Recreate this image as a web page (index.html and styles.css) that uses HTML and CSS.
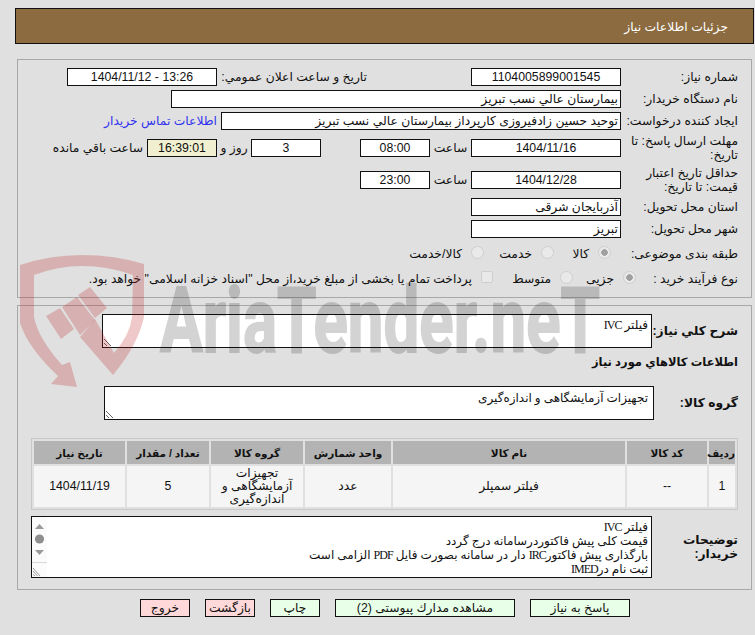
FILE: index.html
```html
<!DOCTYPE html>
<html lang="fa" dir="rtl">
<head>
<meta charset="utf-8">
<title>جزئيات اطلاعات نياز</title>
<link rel="stylesheet" href="styles.css">
</head>
<body>
<div class="page">
  <header class="title-bar">جزئيات اطلاعات نياز</header>

  <section class="panel panel-top">
    <div class="row">
      <div class="lab">شماره نياز:</div>
      <div class="box w150 center">1104005899001545</div>
      <div class="lab lab-pub">تاريخ و ساعت اعلان عمومي:</div>
      <div class="box w150 center">13:26 - 1404/11/12</div>
    </div>
    <div class="row">
      <div class="lab">نام دستگاه خريدار:</div>
      <div class="box w450">بيمارستان عالي نسب تبريز</div>
    </div>
    <div class="row">
      <div class="lab">ايجاد كننده درخواست:</div>
      <div class="box w400">توحيد حسين زادفيروزی كارپرداز بيمارستان عالي نسب تبريز</div>
      <a class="contact" href="#">اطلاعات تماس خريدار</a>
    </div>
    <div class="row row-tall">
      <div class="lab">مهلت ارسال پاسخ: تا<br>تاريخ:</div>
      <div class="box w150 center">1404/11/16</div>
      <div class="unit u41">ساعت</div>
      <div class="box w70 center">08:00</div>
      <div class="spacer39"></div>
      <div class="box w70 center">3</div>
      <div class="unit u34">روز و</div>
      <div class="box w70 center countdown">16:39:01</div>
      <div class="remain">ساعت باقي مانده</div>
    </div>
    <div class="row row-tall">
      <div class="lab">حداقل تاريخ اعتبار<br>قيمت: تا تاريخ:</div>
      <div class="box w150 center">1404/12/28</div>
      <div class="unit u41">ساعت</div>
      <div class="box w70 center">23:00</div>
    </div>
    <div class="row">
      <div class="lab">استان محل تحويل:</div>
      <div class="box w150">آذربايجان شرقی</div>
    </div>
    <div class="row">
      <div class="lab">شهر محل تحويل:</div>
      <div class="box w150">تبريز</div>
    </div>
    <div class="row row-opt">
      <div class="lab">طبقه بندی موضوعی:</div>
      <label class="opt opt-a"><input type="radio" name="cat" checked disabled><span>كالا</span></label>
      <label class="opt opt-b"><input type="radio" name="cat" disabled><span>خدمت</span></label>
      <label class="opt"><input type="radio" name="cat" disabled><span>كالا/خدمت</span></label>
    </div>
    <div class="row row-opt row-last">
      <div class="lab lab-narrow">نوع فرآيند خريد :</div>
      <label class="opt opt-d"><input type="radio" name="kind" checked disabled><span>جزيی</span></label>
      <label class="opt opt-e"><input type="radio" name="kind" disabled><span>متوسط</span></label>
      <label class="opt"><input type="checkbox" disabled><span>پرداخت تمام يا بخشی از مبلغ خريد،از محل "اسناد خزانه اسلامی" خواهد بود.</span></label>
    </div>
  </section>

  <section class="panel panel-bottom">
    <div class="row row-area">
      <div class="lab lab-b lab86">شرح كلي نياز:</div>
      <div class="area">فيلتر <span class="lat">IVC</span></div>
    </div>
    <h2 class="sub">اطلاعات كالاهاي مورد نياز</h2>
    <div class="row row-area">
      <div class="lab lab-b lab84">گروه كالا:</div>
      <div class="area area-b">تجهيزات آزمايشگاهی و اندازه‌گيری</div>
    </div>
    <table class="items">
      <thead>
        <tr>
          <th class="c1">رديف</th>
          <th class="c2">كد كالا</th>
          <th class="c3">نام كالا</th>
          <th class="c4">واحد شمارش</th>
          <th class="c5">گروه كالا</th>
          <th class="c6">تعداد / مقدار</th>
          <th class="c7">تاريخ نياز</th>
        </tr>
      </thead>
      <tbody>
        <tr>
          <td>1</td>
          <td>--</td>
          <td>فيلتر سمپلر</td>
          <td>عدد</td>
          <td>تجهيزات آزمايشگاهی و اندازه‌گيری</td>
          <td>5</td>
          <td>1404/11/19</td>
        </tr>
      </tbody>
    </table>
    <div class="row row-desc">
      <div class="lab lab-b lab86">توضيحات<br>خريدار:</div>
      <div class="desc">
        <div class="desc-text">فيلتر <span class="lat">IVC</span><br>قيمت كلی پيش فاكتوردرسامانه درج گردد<br>بارگذاری پيش فاكتور<span class="lat">IRC</span> دار در سامانه بصورت فايل <span class="lat">PDF</span> الزامی است<br>ثبت نام در<span class="lat">IMED</span></div>
        <svg class="desc-bar" width="15" height="60" viewBox="0 0 15 60" aria-hidden="true">
          <path d="M3 12 L7.5 7 L12 12 Z" fill="#9a9a9a"/>
          <circle cx="7.5" cy="22" r="4.6" fill="#8e8e8e"/>
          <path d="M3 33 L12 33 L7.5 38 Z" fill="#9a9a9a"/>
          <path d="M0 45.5 H15" stroke="#d8d8d8" fill="none"/>
          <path d="M1 51 L8 59 M1 54 L5.500 59 M1 57.500 L3 59" stroke="#808080" stroke-width=".8" fill="none"/>
        </svg>
      </div>
    </div>
  </section>

  <nav class="actions">
    <button class="btn ok w100">پاسخ به نياز</button>
    <button class="btn ok w180">مشاهده مدارك پيوستی (2)</button>
    <button class="btn ok w50">چاپ</button>
    <button class="btn no w50">بازگشت</button>
    <button class="btn no w50">خروج</button>
  </nav>

  <svg class="watermark" width="755" height="635" viewBox="0 0 755 635" aria-hidden="true">
    <path class="wm-red" fill-rule="evenodd" d="M20 265 Q50 255 82 255 Q115 255 144 264 L144 317 Q138 345 113 375 L80 337 L95 319 L114 353 Q130 335 132 317 L133 275 Q108 266 82 266 Q58 266 34 275 L34 317 Q38 338 62 365 L70 362 L77 387 L51 384 L58 376 Q28 348 20 323 Z"/>
    <path class="wm-red" d="M46 316 L60 308 L74 329 L61 339 Z M62 307 L77 297 L95 320 L80 335 Z M78 295 L90 287 L107 308 L95 318 Z"/>
    <text class="wm-text" x="160" y="352" textLength="440" lengthAdjust="spacingAndGlyphs">AriaTender.neT</text>
  </svg>
</div>
</body>
</html>
```

FILE: styles.css
```css
* { box-sizing: border-box; }
html, body { margin: 0; padding: 0; }
body {
  background: #e0e0e0;
  color: #111;
  font-family: "Liberation Sans", "DejaVu Sans", sans-serif;
  font-size: 12.3px;
  line-height: 14px;
}
.page {
  position: relative;
  width: 755px;
  height: 635px;
  overflow: hidden;
  padding: 8px 1px 0 15px;
}
.title-bar {
  height: 36px;
  line-height: 36px;
  padding-right: 25px;
  background: #8b6b3f;
  border: 1px solid #111;
  color: #fff;
  margin-bottom: 15px;
}
.panel {
  border: 1px solid #a8a8a8;
  margin: 0 2px 0 2px;
  padding-right: 13px;
}
.panel-top { height: 239px; padding-top: 8px; }
.panel-bottom { height: 285px; margin-top: 7px; padding-top: 8px; }

.row { display: flex; align-items: center; min-height: 18px; margin-bottom: 4px; }
.row-tall { height: 28px; }
.row-opt { height: 24px; margin-bottom: 1px; }
.row-last { margin-bottom: 0; }
.lab { width: 117px; flex: none; white-space: nowrap; }
.lab-b { font-weight: bold; }
.lab86 { width: 86px; }
.lab84 { width: 84px; }
.lab-pub { width: 150px; margin-right: 104px; }
.lab-narrow { width: 102px; }

.box {
  height: 18px;
  line-height: 16px;
  flex: none;
  background: #fff;
  border: 1px solid #111;
  padding: 0 2px;
  white-space: nowrap;
  overflow: hidden;
}
.center { text-align: center; }
.w150 { width: 150px; }
.w450 { width: 450px; }
.w400 { width: 400px; }
.w70 { width: 70px; }
.countdown { background: #f0f0d0; }
.unit { flex: none; text-align: center; }
.u41 { width: 41px; }
.u34 { width: 34px; }
.spacer39 { width: 39px; flex: none; }
.remain { margin-right: 4px; white-space: nowrap; }
.contact { margin-right: 4px; color: #3333ee; text-decoration: none; white-space: nowrap; }

.opt { display: flex; align-items: center; flex: none; white-space: nowrap; }
.opt input {
  appearance: none;
  flex: none;
  width: 13px;
  height: 13px;
  margin: 0;
  background: #e9e9e9;
  border: 1px solid #cfcfcf;
  position: relative;
  top: -2px;
}
.opt input[type="radio"] { border-radius: 50%; }
.opt input[type="checkbox"] { border-radius: 2px; width: 12px; height: 12px; }
.opt input:checked { background: radial-gradient(circle, #a0a0a0 0 3px, #e9e9e9 3.5px); }
.opt span { margin-right: 9px; }
.opt-a { width: 57px; margin-right: 10px; }
.opt-b { width: 70px; }
.opt-d { width: 63px; }
.opt-e { width: 80px; }

.row-area { margin-bottom: 0; height: 34px; }
.area {
  flex: none;
  width: 550px;
  height: 34px;
  background: #fff;
  border: 1px solid #111;
  padding: 3px;
  font-family: "Liberation Serif", "DejaVu Sans", serif;
  font-size: 12px;
  line-height: 14px;
  overflow: hidden;
  resize: both;
}
.area-b { padding-top: 4px; padding-right: 5px; }
.lat { font-size: 12px; letter-spacing: -1px; }
.sub { margin: 6px 0 16px; font-size: 11.5px; line-height: 16px; font-weight: bold; }

.items {
  table-layout: fixed;
  width: 707px;
  margin-top: 18px;
  border: 1px solid #c8c8c8;
  border-spacing: 2px;
  border-collapse: separate;
  text-align: center;
}
.items th { height: 23px; padding: 0; background: #b3b3b3; font-size: 10.5px; }
.items td { height: 41px; padding: 0 8px; background: #f5f5f5; line-height: 13px; }
.c1 { width: 26px; }
.c2 { width: 80px; }
.c3 { width: 232px; }
.c4 { width: 86px; }
.c5 { width: 92px; }
.c6 { width: 82px; }
.c7 { width: 91px; }

.row-desc { margin: 6px 0 0; align-items: center; }
.desc {
  flex: none;
  display: flex;
  width: 621px;
  height: 62px;
  background: #fff;
  border: 1px solid #111;
}
.desc-text {
  flex: 1;
  padding: 3px 3px 0 0;
  font-family: "Liberation Serif", "DejaVu Sans", serif;
  font-size: 12px;
  line-height: 14px;
  white-space: nowrap;
}
.desc-bar { flex: none; background: #fbfbfb; }

.actions { display: flex; gap: 15px; margin-top: 9px; padding-right: 124px; }
.btn {
  flex: none;
  height: 18px;
  margin: 0;
  padding: 0;
  border: 1px solid #111;
  border-radius: 0;
  color: #111;
  font-family: inherit;
  font-size: 12.3px;
  line-height: 14px;
}
.ok { background: #e8ffe8; }
.no { background: #ffd9d9; }
.w100 { width: 100px; }
.w180 { width: 180px; }
.w50 { width: 50px; }

.watermark { position: absolute; left: 0; top: 0; pointer-events: none; }
.wm-red { fill: rgba(190, 30, 30, 0.24); }
.wm-text {
  fill: #000;
  stroke: #000;
  stroke-width: 2px;
  opacity: 0.17;
  font-family: Roboto, sans-serif;
  font-weight: 700;
  font-size: 91px;
  direction: ltr;
  unicode-bidi: bidi-override;
}
```
